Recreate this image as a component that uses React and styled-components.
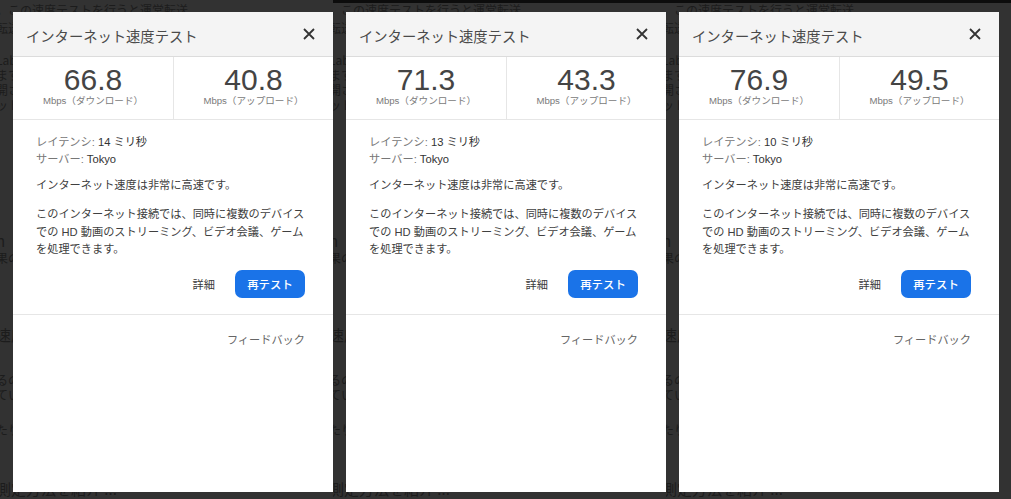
import React from "react";
import styled, { createGlobalStyle } from "styled-components";

const GlobalStyle = createGlobalStyle`
  html, body {
    margin: 0;
    padding: 0;
    background: #313131;
  }
  body {
    font-family: "Liberation Sans", "Noto Sans CJK JP", sans-serif;
  }
`;

const results = [
  { down: "66.8", up: "40.8", latency: 14 },
  { down: "71.3", up: "43.3", latency: 13 },
  { down: "76.9", up: "49.5", latency: 10 },
];

// faint page behind the dimmed overlay, only its edges show
const pageLines = [
  { text: "。この速度テストを行うと運営転送", top: 2 },
  { text: "転送", top: 3 },
  { text: "Lab", top: 17 },
  { text: "ます", top: 0 },
  { text: "開さ", top: 0 },
  { text: "ット", top: 0 },
  { text: "n", top: 120, big: true },
  { text: "果の", top: 0 },
  { text: "速度", top: 61, big: true },
  { text: "るの", top: 28 },
  { text: "てい", top: 0 },
  { text: "たり", top: 20 },
  { text: "測定方法を紹介 ...", top: 43, big: true },
];

export default function App() {
  return (
    <>
      <GlobalStyle />
      <Screen>
        {results.map((r, i) => (
          <SpeedShot key={i} result={r} edge={i > 0} last={i === results.length - 1} />
        ))}
      </Screen>
    </>
  );
}

const SpeedShot = ({ result, edge, last }) => (
  <Shot $edge={edge} $last={last}>
    <Page $edge={edge}>
      {pageLines.map((l, i) => (
        <PageLine key={i} $top={l.top} $big={l.big}>
          {l.text}
        </PageLine>
      ))}
    </Page>
    <Dialog $edge={edge}>
      <Header>
        <Title>インターネット速度テスト</Title>
        <CloseButton aria-label="close">
          <svg width="12" height="12" viewBox="0 0 12 12">
            <path d="M1 1L11 11M11 1L1 11" stroke="#333" strokeWidth="1.8" fill="none" />
          </svg>
        </CloseButton>
      </Header>
      <Stats>
        <Stat>
          <Big>{result.down}</Big>
          <Unit>Mbps（ダウンロード）</Unit>
        </Stat>
        <Stat>
          <Big>{result.up}</Big>
          <Unit>Mbps（アップロード）</Unit>
        </Stat>
      </Stats>
      <Body>
        <Meta>
          <div>
            レイテンシ: <Value>{result.latency} ミリ秒</Value>
          </div>
          <div>
            サーバー: <Value>Tokyo</Value>
          </div>
        </Meta>
        <Text>インターネット速度は非常に高速です。</Text>
        <Paragraph>
          このインターネット接続では、同時に複数のデバイスでの HD 動画のストリーミング、ビデオ会議、ゲームを処理できます。
        </Paragraph>
        <Actions>
          <TextButton>詳細</TextButton>
          <PrimaryButton>再テスト</PrimaryButton>
        </Actions>
      </Body>
      <Footer>
        <FeedbackLink>フィードバック</FeedbackLink>
      </Footer>
    </Dialog>
  </Shot>
);

const Screen = styled.div`
  display: flex;
  width: 1011px;
  height: 499px;
  overflow: hidden;
  background: #313131;
`;

const Shot = styled.div`
  position: relative;
  flex: none;
  width: ${(p) => (p.$last ? "345px" : "333px")};
  height: 499px;
  overflow: hidden;
  background: #323232;
  box-sizing: border-box;
  border-top: ${(p) => (p.$edge ? "3px solid #0c0c0c" : "none")};
`;

const Page = styled.div`
  display: flex;
  flex-direction: column;
  margin-left: -4px;
  margin-top: ${(p) => (p.$edge ? -3 : 0)}px;
  color: #1c1c1c;
  font-family: "Noto Sans CJK JP", sans-serif;
  font-size: 12px;
  line-height: 15px;
`;

const PageLine = styled.div`
  margin-top: ${(p) => p.$top}px;
  font-size: ${(p) => (p.$big ? "15px" : "12px")};
  line-height: ${(p) => (p.$big ? "18px" : "15px")};
  white-space: nowrap;
`;

const Dialog = styled.div`
  position: absolute;
  top: ${(p) => (p.$edge ? 9 : 12)}px;
  left: 13px;
  width: 320px;
  height: 480px;
  background: #ffffff;
  display: flex;
  flex-direction: column;
  box-sizing: border-box;
`;

const Header = styled.div`
  display: flex;
  align-items: center;
  justify-content: space-between;
  height: 44px;
  padding: 0 16px 0 13px;
  background: #f4f4f4;
  border-bottom: 1px solid #dcdcdc;
  flex: none;
`;

const Title = styled.div`
  font-family: "Noto Sans CJK JP", sans-serif;
  font-size: 14.3px;
  color: #4a4a4a;
  margin-top: 2px;
`;

const CloseButton = styled.div`
  display: flex;
  align-items: center;
  justify-content: center;
  width: 16px;
  height: 16px;
`;

const Stats = styled.div`
  display: grid;
  grid-template-columns: 160px 1fr;
  height: 62px;
  border-bottom: 1px solid #e6e6e6;
  flex: none;
`;

const Stat = styled.div`
  display: flex;
  flex-direction: column;
  align-items: center;
  padding-top: 8px;
  & + & {
    border-left: 1px solid #e6e6e6;
  }
`;

const Big = styled.div`
  font-family: "Liberation Sans", Arial, sans-serif;
  font-size: 30px;
  line-height: 30px;
  color: #444444;
`;

const Unit = styled.div`
  font-family: "Liberation Sans", "Noto Sans CJK JP", sans-serif;
  font-size: 9.6px;
  line-height: 12px;
  color: #7a7a7a;
`;

const Body = styled.div`
  display: flex;
  flex-direction: column;
  padding: 14px 28px 16px 23px;
  border-bottom: 1px solid #e6e6e6;
  font-family: "Liberation Sans", "Noto Sans CJK JP", sans-serif;
  font-size: 11.2px;
  color: #404040;
`;

const Meta = styled.div`
  line-height: 17px;
  color: #777777;
`;

const Value = styled.span`
  color: #333333;
`;

const Text = styled.div`
  margin-top: 9px;
  line-height: 17px;
`;

const Paragraph = styled.div`
  margin-top: 12px;
  line-height: 17.5px;
`;

const Actions = styled.div`
  display: flex;
  justify-content: flex-end;
  align-items: center;
  gap: 20px;
  margin-top: 11px;
`;

const TextButton = styled.div`
  color: #3a3a3a;
  font-size: 11.2px;
  font-family: "Noto Sans CJK JP", sans-serif;
`;

const PrimaryButton = styled.div`
  display: flex;
  align-items: center;
  justify-content: center;
  width: 70px;
  height: 28px;
  border-radius: 7px;
  background: #1a73e8;
  color: #ffffff;
  font-family: "Noto Sans CJK JP", sans-serif;
  font-size: 11.4px;
  font-weight: 500;
`;

const Footer = styled.div`
  display: flex;
  justify-content: flex-end;
  padding: 16px 28px 0 0;
`;

const FeedbackLink = styled.div`
  font-family: "Noto Sans CJK JP", sans-serif;
  font-size: 11.2px;
  color: #666666;
`;
